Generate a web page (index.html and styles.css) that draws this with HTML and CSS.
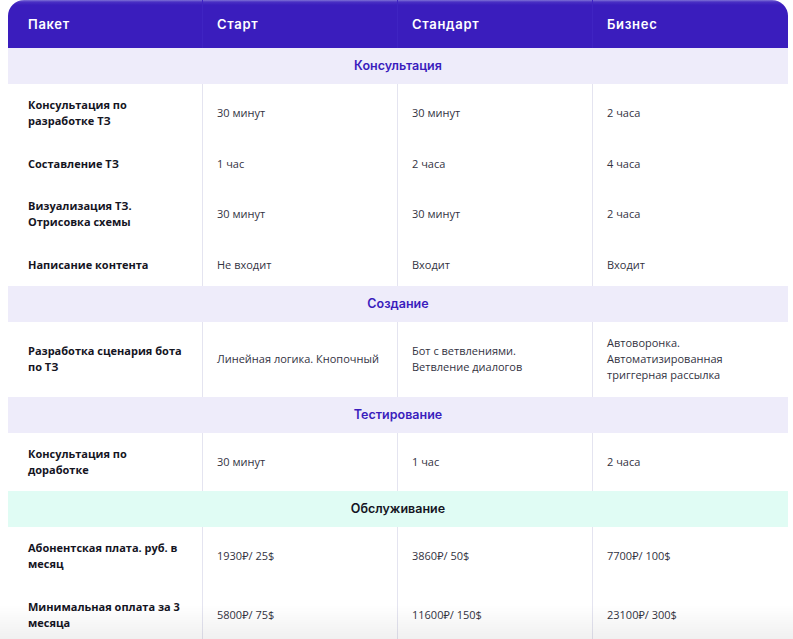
FILE: index.html
```html
<!DOCTYPE html>
<html lang="ru">
<head>
<meta charset="utf-8">
<title>Пакеты</title>
<link rel="stylesheet" href="styles.css">
</head>
<body>
<div class="wrap">
<table class="price">
  <colgroup><col><col><col><col></colgroup>
  <thead>
    <tr><th>Пакет</th><th>Старт</th><th>Стандарт</th><th>Бизнес</th></tr>
  </thead>
  <tbody>
    <tr class="sec"><td colspan="4">Консультация</td></tr>
    <tr><td class="lbl">Консультация по разработке ТЗ</td><td>30 минут</td><td>30 минут</td><td>2 часа</td></tr>
    <tr><td class="lbl">Составление ТЗ</td><td>1 час</td><td>2 часа</td><td>4 часа</td></tr>
    <tr><td class="lbl">Визуализация ТЗ. Отрисовка схемы</td><td>30 минут</td><td>30 минут</td><td>2 часа</td></tr>
    <tr><td class="lbl">Написание контента</td><td>Не входит</td><td>Входит</td><td>Входит</td></tr>
    <tr class="sec"><td colspan="4">Создание</td></tr>
    <tr><td class="lbl">Разработка сценария бота по ТЗ</td><td>Линейная логика. Кнопочный</td><td>Бот с ветвлениями.<br>Ветвление диалогов</td><td>Автоворонка.<br>Автоматизированная<br>триггерная рассылка</td></tr>
    <tr class="sec"><td colspan="4">Тестирование</td></tr>
    <tr><td class="lbl">Консультация по доработке</td><td>30 минут</td><td>1 час</td><td>2 часа</td></tr>
    <tr class="sec mint"><td colspan="4">Обслуживание</td></tr>
    <tr><td class="lbl">Абонентская плата. руб. в месяц</td><td>1930₽/ 25$</td><td>3860₽/ 50$</td><td>7700₽/ 100$</td></tr>
    <tr><td class="lbl">Минимальная оплата за 3 месяца</td><td>5800₽/ 75$</td><td>11600₽/ 150$</td><td>23100₽/ 300$</td></tr>
  </tbody>
</table>
</div>
<div class="fade"></div>
</body>
</html>
```
FILE: styles.css
```css
html, body {
  margin: 0;
  padding: 0;
  background: #ffffff;
}
body {
  padding-left: 8px;
  font-family: "Open Sans", "Noto Sans", sans-serif;
  overflow: hidden;
  height: 639px;
}
.wrap {
  width: 780px;
}
.price {
  width: 780px;
  border-collapse: separate;
  border-spacing: 0;
  table-layout: fixed;
}
.price col {
  width: 195px;
}
.price thead th {
  height: 48px;
  padding: 0 14px;
  text-align: left;
  font-family: "Inter", "Liberation Sans", sans-serif;
  font-weight: 600;
  font-size: 13px;
  letter-spacing: 0.7px;
  color: #ffffff;
  background: linear-gradient(to bottom, #7f72d6 0, #4a30c4 2px, #3a1dbd 5px, #3a1dbd 100%);
  border-right: 1px solid #3f24c2;
  box-sizing: border-box;
}
.price thead th:first-child {
  padding-left: 20px;
  border-top-left-radius: 16px;
}
.price thead th:last-child {
  border-top-right-radius: 16px;
  border-right: 0;
}
.price tbody td {
  padding: 13.25px 14px;
  font-size: 11px;
  line-height: 16px;
  color: #33333f;
  vertical-align: middle;
  border-right: 1px solid #e4e4f0;
}
.price tbody td:last-child {
  border-right: 0;
}
.price tbody td.lbl {
  padding-left: 20px;
  font-weight: 700;
  color: #15151f;
  padding-right: 16px;
}
.price tr.sec td {
  height: 36px;
  padding: 0;
  box-sizing: border-box;
  text-align: center;
  font-family: "Inter", "Liberation Sans", sans-serif;
  font-weight: 600;
  font-size: 12.5px;
  color: #3a1dbd;
  background: #eeecfa;
  border-right: 0;
}
.price tr.sec.mint td {
  background: #e0fcf4;
  color: #15151f;
}
.fade {
  position: fixed;
  left: 0;
  right: 0;
  bottom: 0;
  height: 34px;
  background: linear-gradient(to bottom, rgba(0,0,0,0) 0, rgba(0,0,0,0.06) 100%);
  pointer-events: none;
}
```
